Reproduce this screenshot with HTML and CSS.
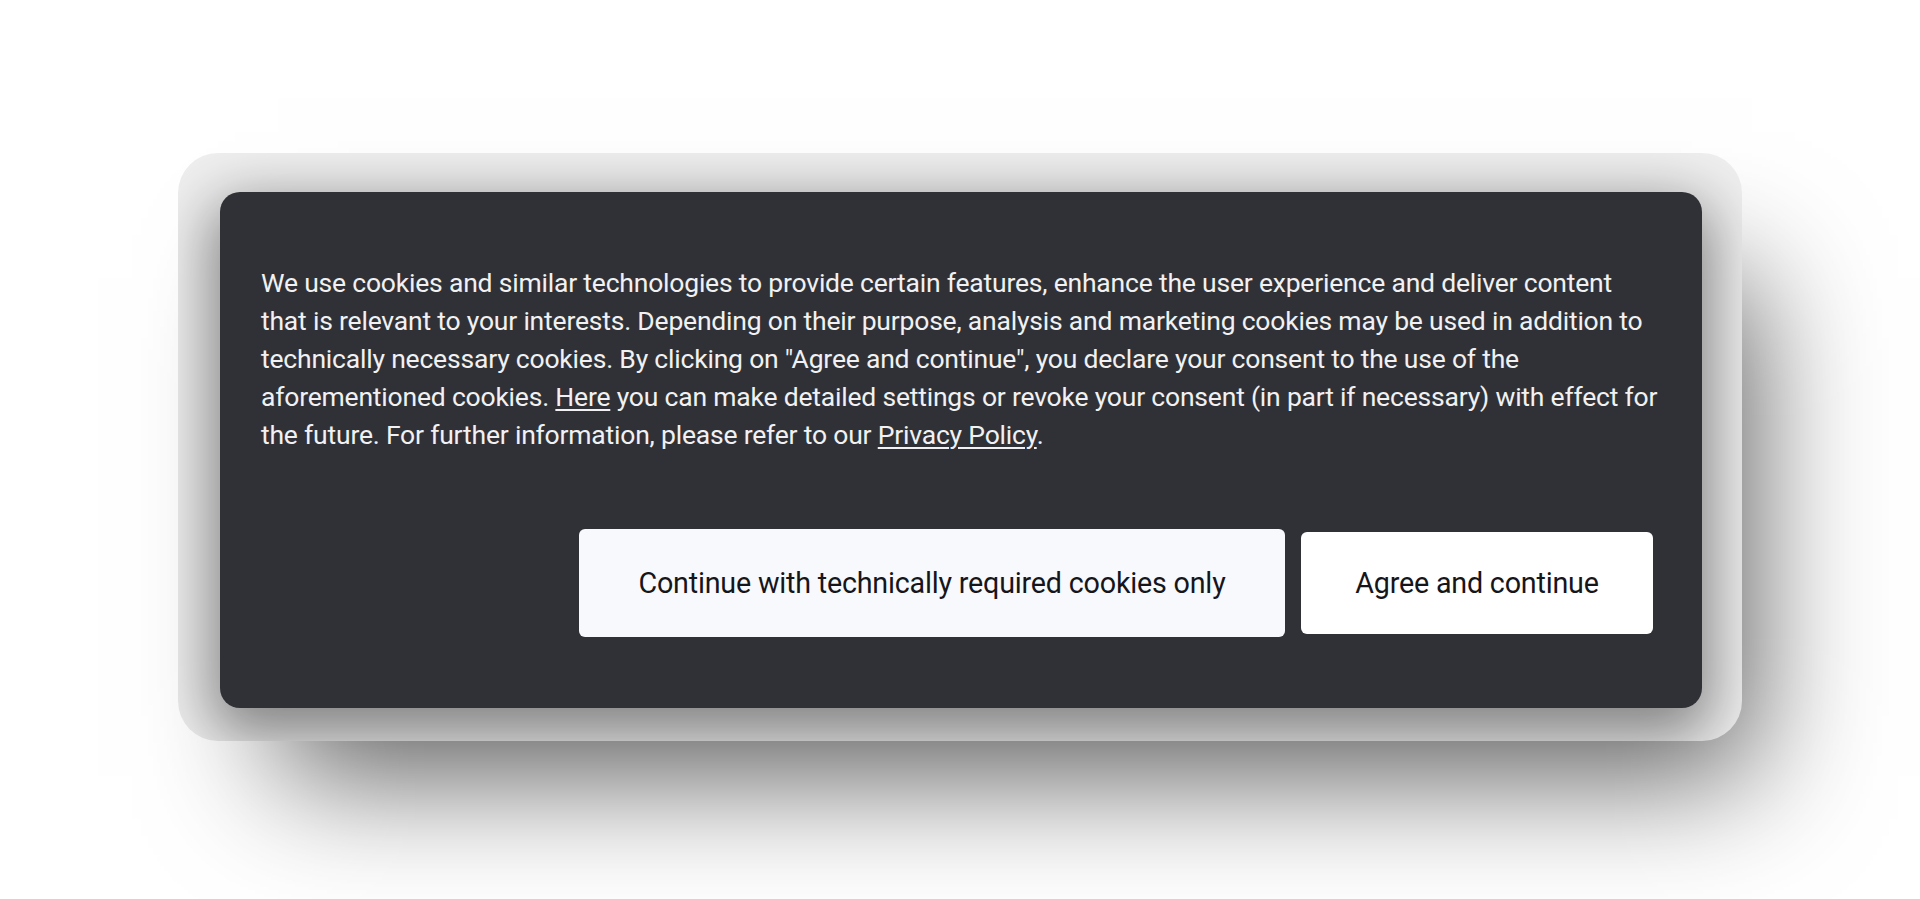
FILE: index.html
```html
<!DOCTYPE html>
<html lang="en">
<head>
<meta charset="utf-8">
<title>Cookie consent</title>
<link rel="stylesheet" href="styles.css">
</head>
<body>
<div class="stage">
  <div class="frame">
    <section class="card">
      <p class="notice">We use cookies and similar technologies to provide certain features, enhance the user experience and deliver content that is relevant to your interests. Depending on their purpose, analysis and marketing cookies may be used in addition to technically necessary cookies. By clicking on "Agree and continue", you declare your consent to the use of the aforementioned cookies. <a class="link" href="#">Here</a> you can make detailed settings or revoke your consent (in part if necessary) with effect for the future. For further information, please refer to our <a class="link" href="#">Privacy Policy</a>.</p>
      <div class="actions">
        <button class="btn btn-secondary" type="button">Continue with technically required cookies only</button>
        <button class="btn btn-primary" type="button">Agree and continue</button>
      </div>
    </section>
  </div>
</div>
</body>
</html>
```
FILE: styles.css
```css
html, body {
  margin: 0;
  background: #ffffff;
}

body {
  height: 899px;
  overflow: hidden;
  font-family: Roboto, "Liberation Sans", sans-serif;
}

.stage {
  padding-top: 153px;
}

.frame {
  box-sizing: border-box;
  width: 1564px;
  height: 588px;
  margin: 0 auto;
  padding: 39px 40px 33px 42px;
  background: #efefef;
  border-radius: 40px;
  overflow: hidden;
  box-shadow: 55px 80px 120px -45px rgba(0, 0, 0, 0.64);
}

.card {
  box-sizing: border-box;
  width: 1482px;
  height: 516px;
  padding: 72px 42px 0 41px;
  background: #303136;
  border-radius: 20px;
  box-shadow: 0 20px 60px 10px rgba(0, 0, 0, 0.45);
}

.notice {
  margin: 0;
  font-size: 26.5px;
  line-height: 38px;
  letter-spacing: -0.2px;
  color: #f1f1f3;
}

.link {
  color: inherit;
  text-decoration: underline;
  text-decoration-thickness: 2px;
  text-underline-offset: 3px;
}

.actions {
  display: flex;
  justify-content: flex-end;
  align-items: center;
  gap: 16px;
  margin-top: 75px;
  padding-right: 7px;
}

.btn {
  display: flex;
  align-items: center;
  justify-content: center;
  padding: 0;
  border: 0;
  border-radius: 6px;
  font-family: inherit;
  font-size: 28.7px;
  letter-spacing: -0.2px;
  color: #16161a;
  cursor: pointer;
}

.btn-secondary {
  width: 706px;
  height: 108px;
  background: #f8f9fd;
}

.btn-primary {
  width: 352px;
  height: 102px;
  background: #ffffff;
}
```
